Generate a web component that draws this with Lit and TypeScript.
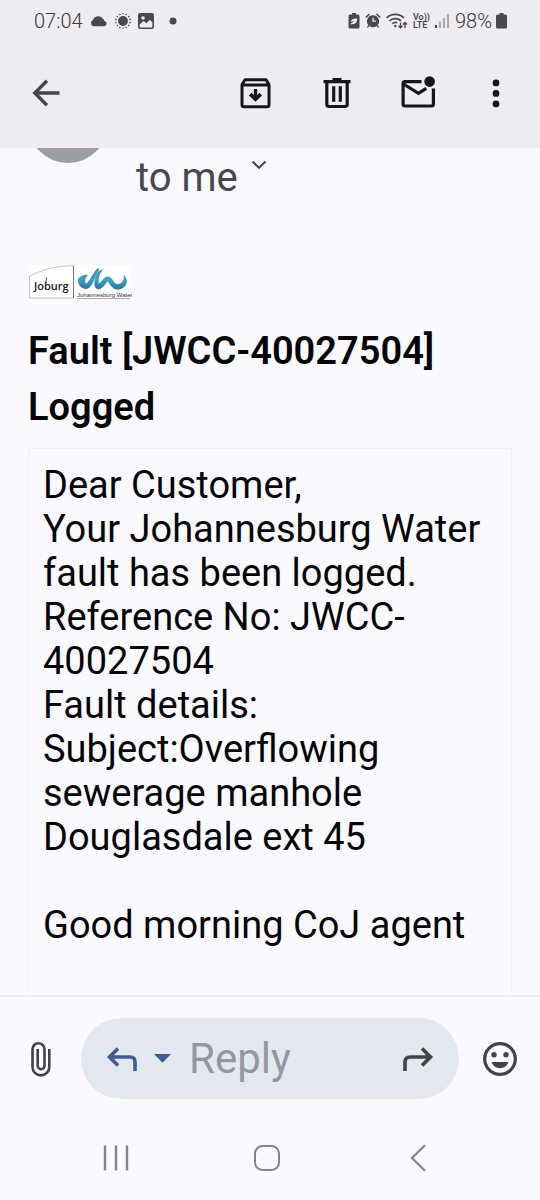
import { LitElement, html, css, svg } from "lit";
import { customElement, property } from "lit/decorators.js";

@customElement("status-bar")
class StatusBar extends LitElement {
  @property() time = "07:04";
  @property() battery = "98%";

  static styles = css`
    :host {
      display: flex;
      align-items: center;
      justify-content: space-between;
      height: 41px;
      padding: 0 33px 0 34px;
      font-size: 20px;
      line-height: 24px;
      color: #4a494d;
    }
    .side {
      display: flex;
      align-items: center;
      gap: 7px;
    }
    .right {
      gap: 5px;
    }
    .text {
      font-weight: 300;
      color: #39383c;
    }
    .dot {
      margin-left: 8px;
    }
    svg {
      display: block;
      fill: currentColor;
    }
    .volte {
      display: grid;
      font-size: 9px;
      line-height: 8px;
      font-weight: 600;
    }
    .power {
      display: flex;
      align-items: center;
      gap: 4px;
    }
  `;

  render() {
    const rays = Array.from({ length: 14 }, (_, i) => {
      const a = (i / 14) * Math.PI * 2;
      return svg`<circle cx=${8 + 7.2 * Math.sin(a)} cy=${8 - 7.2 * Math.cos(a)} r="0.8"></circle>`;
    });
    return html`
      <div class="side">
        <span class="text">${this.time}</span>
        <svg width="18" height="12" viewBox="0 0 18 12">
          <path d="M3.400 11.200a3.200 3.200 0 0 1-.4-6.100A5.400 5.400 0 0 1 12.700 3.600a3.800 3.800 0 0 1 1.600 2.300 2.700 2.700 0 0 1 .2 5.300z"></path>
        </svg>
        <svg width="16" height="16" viewBox="0 0 16 16">
          <circle cx="8" cy="8" r="4.9"></circle>
          ${rays}
        </svg>
        <svg width="16" height="16" viewBox="0 0 16 16">
          <path fill-rule="evenodd" d="M2 0h12a2 2 0 0 1 2 2v12a2 2 0 0 1-2 2H2a2 2 0 0 1-2-2V2a2 2 0 0 1 2-2zM1.600 11.500v2c0 .6.4 1 1 1h10.800c.6 0 1-.4 1-1V9.400l-2.600-2.600-3.300 3.400-3-2.100zM5 3.200a1.800 1.800 0 1 0 0 3.600 1.800 1.800 0 0 0 0-3.600z"></path>
        </svg>
        <svg class="dot" width="8" height="8" viewBox="0 0 8 8"><circle cx="4" cy="4" r="3.5"></circle></svg>
      </div>
      <div class="side right">
        <svg width="12" height="16" viewBox="0 0 12 16">
          <path fill-rule="evenodd" d="M4 0h4v1.500h2A1.500 1.500 0 0 1 11.500 3v11a1.500 1.500 0 0 1-1.500 1.500H2A1.500 1.500 0 0 1 .5 14V3A1.500 1.500 0 0 1 2 1.500h2zM9.300 5.500C5.500 5.200 3 6.300 2.900 8.900L7 7.700l-4.600 3.100.6 1 1-.7c3.300.5 5-1.400 5.300-5.600z"></path>
        </svg>
        <svg width="16" height="16" viewBox="0 0 16 16">
          <path fill-rule="evenodd" d="M8 2.200a6 6 0 0 1 4.600 9.900l1.500 1.900-1 .8-1.600-1.800a6 6 0 0 1-7 0l-1.600 1.800-1-.8 1.500-1.900A6 6 0 0 1 8 2.200zM7.400 4.800v4h3.500V7.600H8.600V4.800z"></path>
          <path d="M.8 4.500 4.400 1M15.200 4.500 11.600 1" stroke="currentColor" stroke-width="1.600"></path>
        </svg>
        <svg width="22" height="16" viewBox="0 0 22 16">
          <g fill="none" stroke="currentColor" stroke-width="1.700">
            <path d="M.6 4.900a12.600 12.600 0 0 1 17.400 0M3.400 8a8.500 8.500 0 0 1 11.600-.1M6.200 10.600a4.600 4.600 0 0 1 5-.8"></path>
            <path d="M14.500 9.500v5M12.500 12.700l2 2 2-2M19 15V9.600M17 11.500l2-2 2 2" stroke-width="1.400"></path>
          </g>
          <circle cx="9.300" cy="13" r="1.300"></circle>
        </svg>
        <span class="volte"><span>Vo))</span><span>LTE</span></span>
        <svg width="15" height="16" viewBox="0 0 15 16">
          <rect x="0" y="12" width="2" height="3"></rect>
          <g opacity=".42">
            <rect x="4" y="8.500" width="2" height="6.500"></rect>
            <rect x="8" y="5" width="2" height="10"></rect>
            <rect x="12" y="1" width="2" height="14"></rect>
          </g>
        </svg>
        <span class="power">
          <span class="text">${this.battery}</span>
          <svg width="11" height="16" viewBox="0 0 11 16">
            <path d="M3.500 0h4v1.500H9.500A1.500 1.500 0 0 1 11 3v11a1.500 1.500 0 0 1-1.500 1.500h-8A1.500 1.500 0 0 1 0 14V3a1.500 1.500 0 0 1 1.500-1.500h2z"></path>
          </svg>
        </span>
      </div>
    `;
  }
}

const buttonReset = css`
  button {
    display: flex;
    align-items: center;
    justify-content: center;
    padding: 0;
    border: 0;
    background: none;
    color: inherit;
    font: inherit;
    cursor: pointer;
  }
  svg {
    display: block;
    flex: none;
  }
`;

@customElement("mail-toolbar")
class MailToolbar extends LitElement {
  static styles = [
    buttonReset,
    css`
      :host {
        display: flex;
        align-items: center;
        height: 104px;
        padding: 0 23px 0 22px;
        color: #17161b;
      }
      button {
        width: 48px;
        height: 48px;
      }
      .back {
        margin-right: auto;
        color: #47464b;
      }
      .actions {
        display: flex;
        gap: 33px;
      }
      .more {
        width: 42px;
      }
    `,
  ];

  render() {
    return html`
      <button class="back" aria-label="Back">
        <svg width="32" height="32" viewBox="0 0 32 32" fill="none" stroke="currentColor" stroke-width="3.400">
          <path d="M29.500 16H5M17 3.800 4.800 16 17 28.200"></path>
        </svg>
      </button>
      <div class="actions">
        <button aria-label="Archive">
          <svg width="32" height="32" viewBox="0 0 32 32" fill="none" stroke="currentColor" stroke-width="3">
            <path d="M2 7.500 5 2.800h21l3 4.700v20.200a2 2 0 0 1-2 2H4a2 2 0 0 1-2-2zM2 8h27" stroke-linejoin="round"></path>
            <path d="M15.500 12v9" stroke-width="3.400"></path>
            <path d="M10.200 17.200l5.300 5 5.300-5" stroke-width="3.800"></path>
          </svg>
        </button>
        <button aria-label="Delete">
          <svg width="32" height="32" viewBox="0 0 32 32" fill="none" stroke="currentColor" stroke-width="3.200">
            <path d="M2.500 4.700h27M11.500 2.600h9M5.800 5v22.300c0 1.300.9 2.200 2.200 2.200h16c1.300 0 2.200-.9 2.200-2.200V5M12.700 9.300v15.400M19.300 9.300v15.400"></path>
          </svg>
        </button>
        <button aria-label="Mark unread">
          <svg width="36" height="36" viewBox="0 0 36 36" fill="none" stroke="currentColor" stroke-width="3.200">
            <path d="M21.500 6.600H5c-1.100 0-1.900.8-1.900 1.900v20.600c0 1.100.8 1.900 1.900 1.900h26.500c1.100 0 1.900-.8 1.900-1.900V13.500M3.500 9l15 9.300 7.800-5"></path>
            <circle cx="29.600" cy="6.600" r="5.300" fill="currentColor" stroke="none"></circle>
          </svg>
        </button>
        <button class="more" aria-label="More options">
          <svg width="8" height="30" viewBox="0 0 8 30" fill="currentColor">
            <circle cx="4" cy="4.900" r="3.400"></circle>
            <circle cx="4" cy="15.400" r="3.400"></circle>
            <circle cx="4" cy="25.900" r="3.400"></circle>
          </svg>
        </button>
      </div>
    `;
  }
}

@customElement("mail-message")
class MailMessage extends LitElement {
  static styles = [
    buttonReset,
    css`
      :host {
        display: block;
        padding: 0 28px;
        color: #050506;
      }
      .sender {
        display: flex;
        align-items: flex-start;
        gap: 28px;
        margin-bottom: 57px;
      }
      .avatar {
        width: 80px;
        height: 80px;
        margin-top: -65px;
        border-radius: 50%;
        background: #9a9ea2;
      }
      .recipient {
        align-items: flex-start;
        gap: 13px;
        font-size: 40px;
        line-height: 60px;
        color: #47484d;
      }
      .recipient svg {
        margin-top: 12px;
      }
      h1 {
        margin: 24px 0 13px;
        font-size: 38px;
        line-height: 56px;
        font-weight: 600;
      }
      .card {
        padding: 14px 14px 72px;
        border: 1px solid #f0f1f5;
        font-size: 38px;
        line-height: 44px;
      }
      p {
        margin: 0;
      }
      .greeting {
        margin-top: 44px;
      }
      .joburg {
        font: 600 11px "Open Sans", sans-serif;
      }
      .water {
        font: 6px "Liberation Sans", sans-serif;
      }
    `,
  ];

  render() {
    return html`
      <div class="sender">
        <div class="avatar"></div>
        <button class="recipient">
          to me
          <svg width="16" height="10" viewBox="0 0 16 10" fill="none" stroke="currentColor" stroke-width="2.200">
            <path d="m1.500 1.500 6.500 6.300 6.500-6.300"></path>
          </svg>
        </button>
      </div>
      <svg width="104" height="34" viewBox="0 0 104 34" role="img" aria-label="Joburg, Johannesburg Water">
        <defs>
          <linearGradient id="wave" x1="0" y1="0" x2="0" y2="1">
            <stop offset="0" stop-color="#4a8ca8"></stop>
            <stop offset=".55" stop-color="#3f9fc4"></stop>
            <stop offset="1" stop-color="#2a7196"></stop>
          </linearGradient>
        </defs>
        <rect x="1" width="102" height="34" fill="#fff"></rect>
        <path d="M1.500 33V11.500C13 5 26 1 45.500.7M1.500 33H45" fill="none" stroke="#a9a9ad" stroke-width=".7"></path>
        <path d="M45.500.7V33" stroke="#77777b"></path>
        <text class="joburg" x="6" y="25" fill="#16161a">Joburg</text>
        <path d="M18.500 18c-1.500-2 .6-3 0-5.500" stroke="#5a3a36" fill="none"></path>
        <path d="M50 14C53 10 57 9.500 60 10 57 13 56.500 17 58 18.500 61 18 64 8 70 3l1.500 1C67 10 66 20 60 23.500 55 25.500 49 20 50 14z" fill="url(#wave)"></path>
        <path d="M75 4.500C71 9 70 16 71 18.500 74 17 76 11 80 11.500 85 12 85 18 89 19 94 19.500 97 14 95.500 9.500 101 15 99.500 22 92 24.300 84 26 82 18 79.500 16.500 77 19 75 24 70 24.300 64.500 23.500 66 14 69 8.500 70.500 6 73 4.500 75 4.500z" fill="url(#wave)"></path>
        <text class="water" x="49" y="32" fill="#34343a">Johannesburg Water</text>
        <path d="M49 33.500h53" stroke="#77777b" stroke-width=".6"></path>
      </svg>
      <h1>Fault [JWCC-40027504] Logged</h1>
      <div class="card">
        <p>Dear Customer,</p>
        <p>Your Johannesburg Water fault has been logged.</p>
        <p>Reference No: JWCC-40027504</p>
        <p>Fault details:</p>
        <p>Subject:Overflowing sewerage manhole Douglasdale ext 45</p>
        <p class="greeting">Good morning CoJ agent</p>
      </div>
    `;
  }
}

@customElement("reply-bar")
class ReplyBar extends LitElement {
  static styles = [
    buttonReset,
    css`
      :host {
        display: grid;
        grid-template-columns: 81px minmax(0, 1fr) 81px;
        align-items: center;
        padding-top: 21px;
        border-top: 2px solid #ebecf0;
        color: #414347;
      }
      button {
        height: 48px;
      }
      .pill {
        display: flex;
        align-items: center;
        height: 81px;
        padding: 0 25px;
        border-radius: 41px;
        background: #e3e8f0;
      }
      .reply {
        color: #3f5b91;
      }
      .mode {
        margin: 0 18px 0 16px;
        color: #3f5b91;
      }
      input {
        flex: 1;
        min-width: 0;
        padding: 0;
        border: 0;
        outline: 0;
        background: none;
        font: inherit;
        font-size: 42px;
        line-height: 56px;
        color: #414347;
      }
      input::placeholder {
        color: #94979e;
        opacity: 1;
      }
    `,
  ];

  render() {
    return html`
      <button aria-label="Attach file">
        <svg width="22" height="36" viewBox="0 0 22 36" fill="none" stroke="currentColor" stroke-width="2.600">
          <path d="M19.300 8v18a8.400 8.400 0 0 1-16.800 0V8.200a6 6 0 0 1 12 0v16.600a3.400 3.400 0 0 1-6.800 0V8"></path>
        </svg>
      </button>
      <div class="pill">
        <button class="reply" aria-label="Reply">
          <svg width="32" height="26" viewBox="0 0 32 26" fill="none" stroke="currentColor" stroke-width="3.600">
            <path d="M12 2.500 3.500 11l8.500 8.500M3.500 11h20.500c3.200 0 5 1.800 5 5V25"></path>
          </svg>
        </button>
        <button class="mode" aria-label="Reply options">
          <svg width="17" height="9" viewBox="0 0 17 9" fill="currentColor"><path d="M0 0h17L8.500 8.800z"></path></svg>
        </button>
        <input type="text" placeholder="Reply" aria-label="Reply text" />
        <button aria-label="Forward">
          <svg width="32" height="26" viewBox="0 0 32 26" fill="none" stroke="currentColor" stroke-width="3.600">
            <path d="M20 2.500 28.500 11 20 19.500M28.500 11H8c-3.200 0-5 1.800-5 5V25"></path>
          </svg>
        </button>
      </div>
      <button aria-label="Emoji">
        <svg width="36" height="36" viewBox="0 0 36 36" fill="currentColor">
          <circle cx="18" cy="18" r="15.300" fill="none" stroke="currentColor" stroke-width="3.200"></circle>
          <circle cx="12" cy="13.700" r="2.700"></circle>
          <circle cx="24" cy="13.700" r="2.700"></circle>
          <path d="M9.500 21h17c-1.300 3.800-4.500 6.200-8.500 6.200S10.800 24.800 9.500 21z"></path>
        </svg>
      </button>
    `;
  }
}

@customElement("system-nav")
class SystemNav extends LitElement {
  static styles = [
    buttonReset,
    css`
      :host {
        display: grid;
        grid-template-columns: repeat(3, 1fr);
        padding: 35px 46px 18px 40px;
        color: #858589;
      }
      button {
        height: 48px;
      }
    `,
  ];

  render() {
    return html`
      <button aria-label="Recent apps">
        <svg width="28" height="28" viewBox="0 0 28 28" fill="none" stroke="currentColor" stroke-width="2.400">
          <path d="M3 1.500v25M14 1.500v25M25 1.500v25"></path>
        </svg>
      </button>
      <button aria-label="Home">
        <svg width="28" height="28" viewBox="0 0 28 28" fill="none" stroke="currentColor" stroke-width="2">
          <rect x="2" y="2" width="24" height="24" rx="7.500"></rect>
        </svg>
      </button>
      <button aria-label="Back">
        <svg width="28" height="28" viewBox="0 0 28 28" fill="none" stroke="currentColor" stroke-width="2.200">
          <path d="M21 1.200 8 14l13 12.800"></path>
        </svg>
      </button>
    `;
  }
}

@customElement("app-root")
class AppRoot extends LitElement {
  static styles = css`
    :host {
      display: flex;
      flex-direction: column;
      height: 100vh;
      background: #faf9ff;
      font-family: Roboto, sans-serif;
    }
    header {
      padding-bottom: 3px;
      background: #eeecf1;
    }
    main {
      flex: 1;
      min-height: 0;
      overflow-y: auto;
      scrollbar-width: none;
    }
  `;

  render() {
    return html`
      <header>
        <status-bar></status-bar>
        <mail-toolbar></mail-toolbar>
      </header>
      <main><mail-message></mail-message></main>
      <footer>
        <reply-bar></reply-bar>
        <system-nav></system-nav>
      </footer>
    `;
  }
}
